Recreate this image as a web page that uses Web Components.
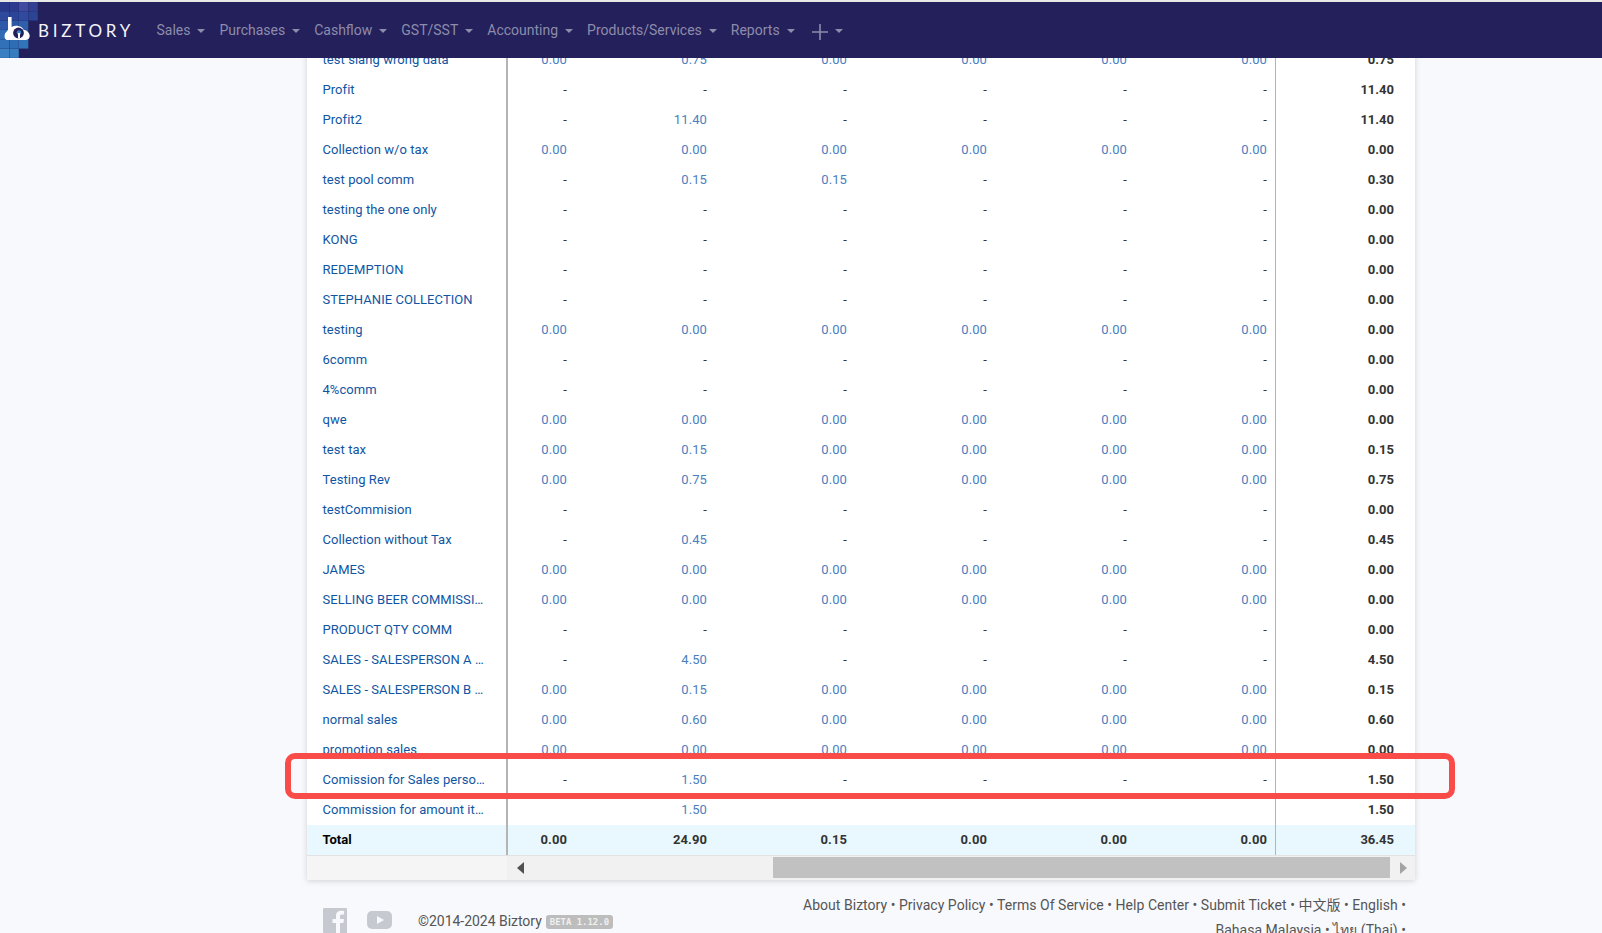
<!DOCTYPE html>
<html lang="en"><head><meta charset="utf-8"><title>Biztory</title>
<style>
html,body{margin:0;padding:0;height:933px;overflow:hidden;background:#f8f9fd;font-family:Roboto,"Noto Sans CJK SC",sans-serif;}
body{display:flex;flex-direction:column;position:relative}
</style></head><body>
<biz-nav>
  <biz-logo slot="logo"></biz-logo>
  <biz-nav-item>Sales</biz-nav-item>
  <biz-nav-item>Purchases</biz-nav-item>
  <biz-nav-item>Cashflow</biz-nav-item>
  <biz-nav-item>GST/SST</biz-nav-item>
  <biz-nav-item>Accounting</biz-nav-item>
  <biz-nav-item>Products/Services</biz-nav-item>
  <biz-nav-item>Reports</biz-nav-item>
  <biz-nav-item plus></biz-nav-item>
</biz-nav>
<biz-table id="t"></biz-table>
<biz-footer></biz-footer>
<biz-highlight></biz-highlight>
<script>
class BizLogo extends HTMLElement{constructor(){super();const s=this.attachShadow({mode:'open'});
const cols=[['#2a3a8a','#2d3a8e','#404a9f','#333f90'],['#2f4a9c','#2b4598','#2f4a9e','#2b4493'],['#2d5aa8','#2c57a5','#2f5eaa'],['#2f6ab4','#2d66b0','#2f6cb4'],['#3270b8','#2e6cb4','#3274ba'],['#3a80c2','#367cbe']];
let r='';cols.forEach((row,y)=>row.forEach((c,x)=>{r+=`<rect x="${x*9.5}" y="${y*9.34}" width="9.3" height="9.2" fill="${c}"/>`}));
s.innerHTML=`<style>:host{display:flex;align-items:center;width:156.5px;height:56px;flex:none;position:relative}
svg{display:block;flex:none}span{font:400 17px Lato,sans-serif;letter-spacing:3.75px;color:#f4f4f8;margin-left:-1px;margin-top:0}</style>
<svg width="39" height="56" viewBox="0 0 39 56">${r}
<path d="M8 15h3.600v10c1.600-1 3.600-1.400 5.600-1.200 3 .2 5.400 1.800 6.400 4 2.600.3 5.400 2.500 6 5.300.4 2.800-1.200 4.900-3.600 4.900H8c-2.800 0-3.600-2-3.400-4.600.1-1.700 .8-3 2-3.700.3-.6 .7-1.200 1.400-1.700z" fill="#fff"/>
<circle cx="18.500" cy="31" r="5.400" fill="#23205b"/><circle cx="19" cy="30.500" r="2.300" fill="#3a80c2"/><rect x="18" y="31" width="2" height="5.500" fill="#fff"/></svg><span>BIZTORY</span>`}}
customElements.define('biz-logo',BizLogo);

class BizNav extends HTMLElement{constructor(){super();this.attachShadow({mode:'open'}).innerHTML=`<style>
:host{display:block;flex:none;height:56px;border-top:2px solid #e8e8e6;background:#23205b;position:relative;z-index:5}
.bar{display:flex;align-items:center;height:56px}</style>
<div class="bar"><slot name="logo"></slot><slot></slot></div>`}}
customElements.define('biz-nav',BizNav);

class BizNavItem extends HTMLElement{constructor(){super();const plus=this.hasAttribute('plus');this.attachShadow({mode:'open'}).innerHTML=`<style>
:host{display:inline-flex;align-items:center;height:56px;margin-right:14px;font:400 14px Roboto,sans-serif;color:#8d8cab;flex:none}
i{display:block;width:0;height:0;border:4px solid transparent;border-top-color:#8d8cab;border-bottom:0;margin-left:7px;margin-top:1px}
svg{display:block;margin-left:3px;margin-top:3px}</style>
${plus?'<svg width="16" height="16" viewBox="0 0 16 16"><path d="M8 0v16M0 8h16" stroke="#8d8cab" stroke-width="1.6"/></svg>':''}<slot></slot><i></i>`}}
customElements.define('biz-nav-item',BizNavItem);

class BizRow extends HTMLElement{
  constructor(){super();this.attachShadow({mode:'open'})}
  set data(d){
    const cell=v=>v===''?'<div class="c"></div>':v==='-'?'<div class="c dash">-</div>':`<div class="c">${v}</div>`;
    this.shadowRoot.innerHTML=`<style>
    :host{display:grid;grid-template-columns:201px 69px repeat(4,140px) 138px 1fr;height:30px;background:#fff;font:400 13px/30px Roboto,sans-serif}
    :host([total]){background:#e9f7fe}
    .n{padding-left:15.5px;padding-right:21px;color:#0f55a3;font-weight:400;letter-spacing:.06px;white-space:nowrap;overflow:hidden;text-overflow:ellipsis;border-right:2px solid #b4b4b4;box-sizing:border-box}
    :host([total]) .n{color:#000;font-weight:700;letter-spacing:0}
    .c{text-align:right;padding-right:10px;color:#4a80bf;letter-spacing:.1px}
    .c:nth-last-child(2){padding-right:8px}
    .dash{color:#333}
    :host([total]) .c{color:#333;font-weight:700}
    .s{text-align:right;padding-right:21px;font-weight:700;color:#333;border-left:1px solid #b4b4b4}
    </style><div class="n">${d.n}</div>${d.v.map(cell).join('')}<div class="s">${d.s}</div>`;
  }
}
customElements.define('biz-row',BizRow);

class BizScrollbar extends HTMLElement{constructor(){super();this.attachShadow({mode:'open'}).innerHTML=`<style>
:host{display:flex;height:25px;background:#f5f5f5;border-top:1px solid #e2e2e2;box-sizing:border-box}
.l{width:200px;flex:none}
.track{flex:1;background:#f1f1f1;display:flex;align-items:center;padding-bottom:1px}
.a{flex:none;width:0;height:0;border:6px solid transparent}
.al{border-right:7px solid #505050;border-left:0;margin-left:10px}
.th{height:21px;background:#c1c1c1;width:617px;margin-left:249px}
.ar{border-left:7px solid #a3a3a3;border-right:0;margin-left:10px}
</style><div class="l"></div><div class="track"><div class="a al"></div><div class="th"></div><div class="a ar"></div></div>`}}
customElements.define('biz-scrollbar',BizScrollbar);

class BizTable extends HTMLElement{constructor(){super();this.attachShadow({mode:'open'}).innerHTML=`<style>
:host{display:block;flex:none;width:1108px;margin:-13px 0 0 307px;background:#fff;box-shadow:0 1px 6px rgba(0,0,0,.16);position:relative;z-index:1}
</style><slot></slot>`}
 connectedCallback(){
  const Z=['0.00','0.00','0.00','0.00','0.00','0.00'],D=['-','-','-','-','-','-'];
  const z=(i,v)=>{const a=[...Z];a[i]=v;return a},d=(i,v)=>{const a=[...D];a[i]=v;return a};
  const rows=[
  ['test slang wrong data',z(1,'0.75'),'0.75'],['Profit',D,'11.40'],['Profit2',d(1,'11.40'),'11.40'],['Collection w/o tax',Z,'0.00'],
  ['test pool comm',['-','0.15','0.15','-','-','-'],'0.30'],['testing the one only',D,'0.00'],['KONG',D,'0.00'],['REDEMPTION',D,'0.00'],
  ['STEPHANIE COLLECTION',D,'0.00'],['testing',Z,'0.00'],['6comm',D,'0.00'],['4%comm',D,'0.00'],['qwe',Z,'0.00'],['test tax',z(1,'0.15'),'0.15'],
  ['Testing Rev',z(1,'0.75'),'0.75'],['testCommision',D,'0.00'],['Collection without Tax',d(1,'0.45'),'0.45'],['JAMES',Z,'0.00'],
  ['SELLING BEER COMMISSION',Z,'0.00'],['PRODUCT QTY COMM',D,'0.00'],['SALES - SALESPERSON A COMMISSION',d(1,'4.50'),'4.50'],
  ['SALES - SALESPERSON B COMMISSION',z(1,'0.15'),'0.15'],['normal sales',z(1,'0.60'),'0.60'],['promotion sales',Z,'0.00'],
  ['Comission for Sales person commission',d(1,'1.50'),'1.50'],['Commission for amount item',['','1.50','','','',''],'1.50']];
  rows.forEach(r=>{const e=document.createElement('biz-row');this.appendChild(e);e.data={n:r[0],v:r[1],s:r[2]}});
  const t=document.createElement('biz-row');t.setAttribute('total','');this.appendChild(t);t.data={n:'Total',v:['0.00','24.90','0.15','0.00','0.00','0.00'],s:'36.45'};
  this.appendChild(document.createElement('biz-scrollbar'));
 }}
customElements.define('biz-table',BizTable);

class BizFooter extends HTMLElement{constructor(){super();this.attachShadow({mode:'open'}).innerHTML=`<style>
:host{display:flex;flex:none;justify-content:space-between;width:1099px;margin:13px 0 0 323px;font:400 14px/25px Roboto,"Noto Sans CJK SC",sans-serif;color:#555}
.left{display:flex;align-items:flex-start;padding-top:15px}
svg{display:block;flex:none}
.copy{margin-left:26px;margin-top:1px;white-space:nowrap;letter-spacing:-.03px}
.badge{display:inline-block;font:700 9px/14px "DejaVu Sans Mono",monospace;background:#bdbdbd;color:#f0f0f0;border-radius:3px;padding:0 4px;margin-left:4px;vertical-align:1px}
.right{width:640px;text-align:right;padding-right:16px;box-sizing:border-box;letter-spacing:.03px}
</style>
<div class="left">
<svg width="24" height="25" viewBox="0 0 24 25"><path fill="#c6cad0" d="M1 0h22a1 1 0 0 1 1 1v24h-7V15h3.400l.6-4h-4V8.500c0-1.200.4-2 2-2h2.100V3c-.5-.1-1.700-.2-3-.2-3 0-5.100 1.800-5.100 5.200v3H9.500v4H13v10H1a1 1 0 0 1-1-1V1a1 1 0 0 1 1-1z"/></svg>
<svg style="margin:3px 0 0 20px" width="25" height="18" viewBox="0 0 25 18"><rect width="25" height="18" rx="5" fill="#c6cad0"/><path d="M10 5v8l7-4z" fill="#f8f9fd"/></svg>
<div class="copy">©2014-2024 Biztory<span class="badge">BETA 1.12.0</span></div>
</div>
<div class="right">About Biztory • Privacy Policy • Terms Of Service • Help Center • Submit Ticket • 中文版 • English • Bahasa Malaysia • ไทย (Thai) •</div>`}}
customElements.define('biz-footer',BizFooter);

class BizHighlight extends HTMLElement{constructor(){super();this.attachShadow({mode:'open'}).innerHTML=`<style>
:host{position:absolute;left:285px;top:753px;width:1170px;height:46px;box-sizing:border-box;border:6px solid #f94c48;border-radius:10px;z-index:3;pointer-events:none}
</style>`}}
customElements.define('biz-highlight',BizHighlight);
</script>
</body></html>
